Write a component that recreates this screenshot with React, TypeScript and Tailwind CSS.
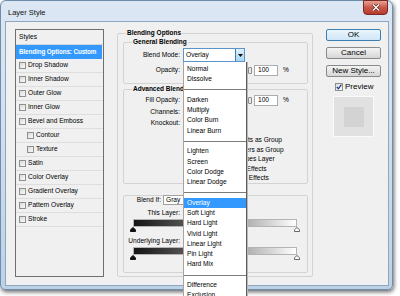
import React from "react";

const Check = () => (
  <span className="w-[7px] h-[7px] shrink-0 border border-[#8e8f8f] bg-linear-to-br from-[#d9d9d9] to-[#fbfbfb]" />
);

const styleRows: [string, boolean][] = [
  ["Drop Shadow", false],
  ["Inner Shadow", false],
  ["Outer Glow", false],
  ["Inner Glow", false],
  ["Bevel and Emboss", false],
  ["Contour", true],
  ["Texture", true],
  ["Satin", false],
  ["Color Overlay", false],
  ["Gradient Overlay", false],
  ["Pattern Overlay", false],
  ["Stroke", false],
];

const modes: (string | null)[] = [
  "Normal",
  "Dissolve",
  null,
  "Darken",
  "Multiply",
  "Color Burn",
  "Linear Burn",
  null,
  "Lighten",
  "Screen",
  "Color Dodge",
  "Linear Dodge",
  null,
  "Overlay",
  "Soft Light",
  "Hard Light",
  "Vivid Light",
  "Linear Light",
  "Pin Light",
  "Hard Mix",
  null,
  "Difference",
  "Exclusion",
];

const Input = ({ value }: { value: string }) => (
  <div className="w-[24px] h-[11px] border border-[#abadb3] bg-white flex items-center pl-[3px]">
    {value}
  </div>
);

const Marker = ({ dark }: { dark: boolean }) => (
  <svg width="6" height="5" viewBox="0 0 6 5">
    <path
      d="M3 0.5 L5.5 2.8 L5.5 4.5 L0.5 4.5 L0.5 2.8 Z"
      fill={dark ? "#111" : "#fff"}
      stroke={dark ? "#111" : "#666"}
      strokeWidth="1"
    />
  </svg>
);

const Button = ({ label, primary = false }: { label: string; primary?: boolean }) => (
  <div
    className={`h-[12px] rounded-[2px] border ${
      primary ? "border-[#3c7fb1] from-[#eaf6fd] to-[#cfe6f7]" : "border-[#8a8a8a] from-[#f4f4f4] to-[#d6d6d6]"
    } bg-linear-to-b flex items-center justify-center text-[8px] leading-none`}
  >
    {label}
  </div>
);

export default function App() {
  return (
    <div className="w-[400px] h-[296px] bg-white relative overflow-hidden font-['Liberation_Sans',Arial,sans-serif] text-[6.6px] leading-none text-black">
      {/* window */}
      <div className="w-[393px] h-[290px] flex flex-col rounded-b-[5px] rounded-t-[6px] border border-[#6f8cab] bg-linear-to-b from-[#dce7f4] via-[#cfdeee] to-[#bdd1e7] shadow-[1px_2px_4px_rgba(0,0,0,0.6)]">
        {/* title bar */}
        <div className="h-[20px] flex shrink-0">
          <div className="pl-[7px] pt-[8px] text-[7.5px] text-[#111]">Layer Style</div>
          <div className="flex-1" />
          <div className="mr-[4px] -mt-[1px] w-[25px] h-[15px] rounded-b-[4px] border border-[#7b2a23] bg-linear-to-b from-[#e6a294] via-[#c9574a] to-[#b8382c] flex items-center justify-center">
            <svg width="8" height="7" viewBox="0 0 8 7">
              <path d="M1 0.5 L7 6.5 M7 0.5 L1 6.5" stroke="#5a1d18" strokeWidth="2.6" />
              <path d="M1 0.5 L7 6.5 M7 0.5 L1 6.5" stroke="#fff" strokeWidth="1.4" />
            </svg>
          </div>
        </div>

        {/* client */}
        <div className="ml-[4px] mr-[3px] mb-[3px] flex-1 border border-[#8fa6bf] bg-[#f0f0f0] flex items-start pt-[7px] pl-[9px]">
          {/* Styles panel */}
          <div className="w-[89px] h-[248px] border border-[#6f6f6f] bg-[#f0f0f0] flex flex-col shrink-0">
            <div className="h-[15px] shrink-0 border-b border-[#d4d4d4] flex items-center pl-[3px]">Styles</div>
            <div className="h-[14px] shrink-0 mr-[1px] bg-[#3399ff] text-white font-bold text-[6.3px] tracking-[-0.1px] whitespace-nowrap flex items-center pl-[3px]">
              Blending Options: Custom
            </div>
            {styleRows.map(([name, indent]) => (
              <div
                key={name}
                className={`h-[14px] shrink-0 border-b border-[#dedede] flex items-center gap-[2px] ${
                  indent ? "pl-[11px]" : "pl-[3px]"
                }`}
              >
                <Check />
                <span className="whitespace-nowrap">{name}</span>
              </div>
            ))}
          </div>

          {/* Blending Options */}
          <fieldset className="ml-[13px] w-[196px] h-[248px] shrink-0 border border-[#d3d3d3] rounded-[2px] pl-[5px] pr-[4px]">
            <legend className="ml-[3px] px-[1px] font-bold leading-[8px] text-[6.5px]">Blending Options</legend>

            {/* General Blending */}
            <fieldset className="mt-[1px] h-[46px] border border-[#d3d3d3] rounded-[2px]">
              <legend className="ml-[8px] px-[1px] font-bold leading-[8px] text-[6.5px]">General Blending</legend>
              <div className="flex items-center mt-[2px]">
                <div className="w-[56px] text-right">Blend Mode:</div>
                <div className="ml-[3px] w-[62px] h-[14px] border border-[#5c93c9] bg-white flex items-center">
                  <span className="flex-1 pl-[2px]">Overlay</span>
                  <span className="w-[9px] h-full border-l border-[#3c7fb1] bg-linear-to-b from-[#dff0fc] to-[#a9d5f3] flex items-center justify-center">
                    <svg width="5" height="3" viewBox="0 0 5 3">
                      <path d="M0 0 L5 0 L2.5 3 Z" fill="#111" />
                    </svg>
                  </span>
                </div>
              </div>
              <div className="flex items-center mt-[3px]">
                <div className="w-[56px] text-right">Opacity:</div>
                <div className="ml-[3px] w-[69px] flex items-center">
                  <div className="flex-1 h-[2px] bg-[#c4c4c4]" />
                  <div className="w-[4px] h-[7px] border border-[#8a8a8a] bg-[#ececec] rounded-[1px]" />
                </div>
                <div className="ml-[2px]">
                  <Input value="100" />
                </div>
                <span className="ml-[5px]">%</span>
              </div>
            </fieldset>

            {/* Advanced Blending */}
            <fieldset className="mt-[1px] h-[99px] border border-[#d3d3d3] rounded-[2px]">
              <legend className="ml-[8px] px-[1px] font-bold leading-[8px] text-[6.5px]">Advanced Blending</legend>
              <div className="flex items-center mt-[2px]">
                <div className="w-[56px] text-right">Fill Opacity:</div>
                <div className="ml-[3px] w-[69px] flex items-center">
                  <div className="flex-1 h-[2px] bg-[#c4c4c4]" />
                  <div className="w-[4px] h-[7px] border border-[#8a8a8a] bg-[#ececec] rounded-[1px]" />
                </div>
                <div className="ml-[2px]">
                  <Input value="100" />
                </div>
                <span className="ml-[5px]">%</span>
              </div>
              <div className="flex items-center mt-[2px] h-[9px]">
                <div className="w-[56px] text-right">Channels:</div>
                <div className="ml-[4px] flex items-center gap-[12px]">
                  <Check />
                  <Check />
                  <Check />
                </div>
              </div>
              <div className="flex items-center mt-[1px] h-[10px]">
                <div className="w-[56px] text-right">Knockout:</div>
                <div className="ml-[3px] w-[50px] h-[10px] border border-[#a0a0a0] bg-white" />
              </div>
              <div className="mt-[8px] flex flex-col">
                {[
                  "Blend Interior Effects as Group",
                  "Blend Clipped Layers as Group",
                  "Transparency Shapes Layer",
                  "Layer Mask Hides Effects",
                  "Vector Mask Hides Effects",
                ].map((t) => (
                  <div key={t} className="h-[9.4px] flex items-center pl-[59px] gap-[2px]">
                    <Check />
                    <span className="whitespace-nowrap">{t}</span>
                  </div>
                ))}
              </div>
            </fieldset>

            {/* Blend If */}
            <div className="mt-[11px] h-[78px] border border-[#d3d3d3] rounded-[2px] flex flex-col">
              <div className="flex items-center -mt-[1px]">
                <div className="w-[37px] text-right">Blend If:</div>
                <div className="ml-[2px] w-[56px] h-[10px] border border-[#a0a0a0] bg-white pl-[2px] flex items-center">Gray</div>
              </div>
              <div className="flex items-center mt-[4px] h-[8px]">
                <div className="w-[56px] text-right">This Layer:</div>
              </div>
              <div className="ml-[9px] mt-[2px] w-[164px] h-[8px] border border-[#b4b4b4] bg-linear-to-r from-[#151515] to-white" />
              <div className="ml-[6px] w-[170px] h-[5px] flex justify-between">
                <Marker dark />
                <Marker dark={false} />
              </div>
              <div className="flex items-center mt-[5px] h-[8px]">
                <div className="w-[56px] text-right whitespace-nowrap">Underlying Layer:</div>
              </div>
              <div className="ml-[9px] mt-[2px] w-[164px] h-[8px] border border-[#b4b4b4] bg-linear-to-r from-[#151515] to-white" />
              <div className="ml-[6px] w-[170px] h-[5px] flex justify-between">
                <Marker dark />
                <Marker dark={false} />
              </div>
            </div>
          </fieldset>

          {/* Right column */}
          <div className="ml-[13px] w-[55px] shrink-0 flex flex-col">
            <Button label="OK" primary />
            <div className="mt-[6px]">
              <Button label="Cancel" />
            </div>
            <div className="mt-[6px]">
              <Button label="New Style..." />
            </div>
            <div className="mt-[6px] ml-[9px] flex items-center gap-[2px] h-[8px]">
              <span className="w-[8px] h-[8px] border border-[#8e8f8f] bg-linear-to-br from-[#dcdcdc] to-white flex items-center justify-center">
                <svg width="6" height="6" viewBox="0 0 6 6">
                  <path d="M0.8 3 L2.4 4.8 L5.4 0.6" fill="none" stroke="#1d3f93" strokeWidth="1.3" />
                </svg>
              </span>
              <span className="text-[8px]">Preview</span>
            </div>
            <div className="mt-[5px] ml-[7px] w-[41px] h-[41px] border border-[#fafafa] bg-[#e1e1e1] flex items-center justify-center">
              <div className="w-[20px] h-[20px] bg-[#d3d3d3]" />
            </div>
          </div>
        </div>
      </div>

      {/* open blend-mode dropdown list */}
      <div className="absolute left-[183px] top-[62px] w-[64px] h-[250px] bg-white border-l border-[#a5a5a5] border-r border-r-[#5e5e5e] shadow-[1px_0_0_#b8b8b8] pt-[2px] flex flex-col">
        {modes.map((m, i) =>
          m === null ? (
            <div key={i} className="h-[10.3px] shrink-0 flex items-center">
              <div className="w-full h-px bg-[#7c7c7c]" />
            </div>
          ) : (
            <div
              key={i}
              className={`h-[10.3px] shrink-0 flex items-center pl-[3px] ${
                m === "Overlay" ? "bg-[#3399ff] text-white" : ""
              }`}
            >
              {m}
            </div>
          )
        )}
      </div>
    </div>
  );
}
